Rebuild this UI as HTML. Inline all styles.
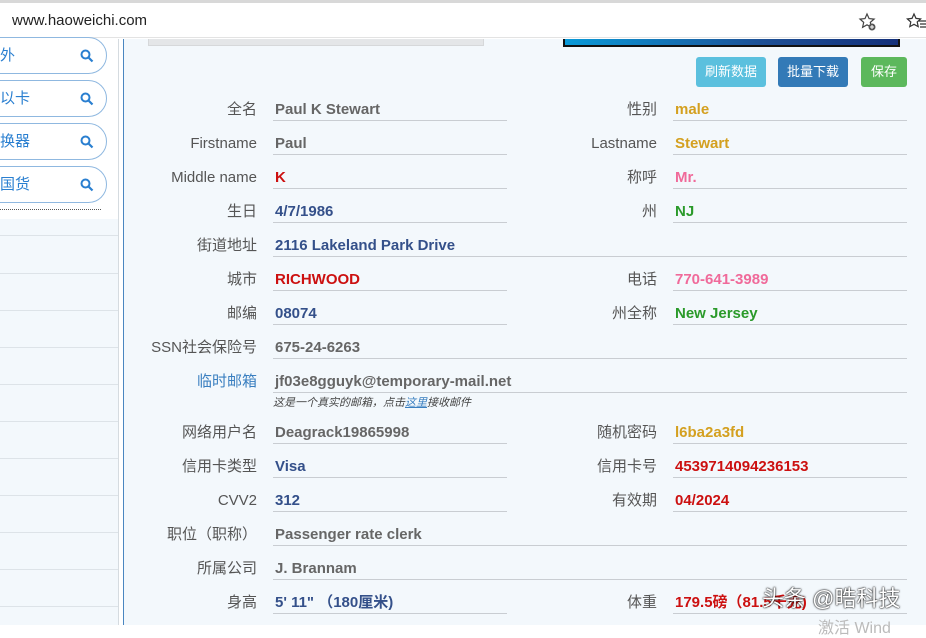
<!DOCTYPE html>
<html><head><meta charset="utf-8"><style>
*{margin:0;padding:0;box-sizing:border-box}
body{width:926px;height:625px;overflow:hidden;background:#fff;font-family:"Liberation Sans","Noto Sans CJK SC",sans-serif;position:relative}
.a{position:absolute}
.lb{position:absolute;text-align:right;font-size:15px;color:#555;line-height:18px;white-space:nowrap;margin-top:2px}
.v{position:absolute;font-size:15px;font-weight:bold;line-height:18px;white-space:nowrap;color:#666;margin-top:2px}
.ln{position:absolute;height:1px;background:#c9cdd2}
.pill{position:absolute;left:-30px;width:137px;height:37px;border:1px solid #8fb8e0;border-radius:19px;background:#fff;color:#2a7fd0;font-size:15px;line-height:35px;padding-left:29px}
.pill svg{position:absolute;right:12px;top:11px}
.sl{position:absolute;left:0;width:118px;height:1px;background:#dde3e8}
.btn{position:absolute;top:57px;height:30px;border-radius:3px;color:#fff;font-size:13px;line-height:30px;text-align:center}
</style></head><body>
<div class="a" style="left:0;top:0;width:926px;height:3px;background:#d8d8d8"></div>
<div class="a" style="left:0;top:3px;width:926px;height:35px;background:#fff;border-bottom:1px solid #e3e3e3"></div>
<div class="a" style="left:12px;top:12px;font-size:15px;color:#222">www.haoweichi.com</div>
<svg class="a" style="left:858px;top:12px" width="20" height="20" viewBox="0 0 20 20"><path d="M9 2l2.1 4.6 5 .5-3.8 3.3 1.1 4.9L9 12.8 4.6 15.3l1.1-4.9L2 7.1l5-.5z" fill="none" stroke="#444" stroke-width="1.2"/><circle cx="14" cy="15" r="3.5" fill="#555"/><path d="M14 13v4M12 15h4" stroke="#fff" stroke-width="1"/></svg>
<svg class="a" style="left:906px;top:12px" width="20" height="20" viewBox="0 0 20 20"><path d="M8 2l2 4.4 4.6.5-3.4 3.1 1 4.6L8 12.3 3.8 14.6l1-4.6L1.4 6.9 6 6.4z" fill="none" stroke="#333" stroke-width="1.2"/><path d="M13 9h7M14 12h6M14 15h6" stroke="#333" stroke-width="1.2"/></svg>
<div class="a" style="left:0;top:39px;width:118px;height:586px;background:#f3f8fc"></div>
<div class="a" style="left:0;top:39px;width:118px;height:180px;background:#fff"></div>
<div class="a" style="left:118px;top:39px;width:1px;height:586px;background:#d5dbe0"></div>
<div class="pill" style="top:37px">外<svg width="14" height="14" viewBox="0 0 14 14"><circle cx="5.5" cy="5.5" r="4" fill="none" stroke="#2a7fd0" stroke-width="2"/><path d="M8.5 8.5l4 4" stroke="#2a7fd0" stroke-width="2.2"/></svg></div>
<div class="pill" style="top:80px">以卡<svg width="14" height="14" viewBox="0 0 14 14"><circle cx="5.5" cy="5.5" r="4" fill="none" stroke="#2a7fd0" stroke-width="2"/><path d="M8.5 8.5l4 4" stroke="#2a7fd0" stroke-width="2.2"/></svg></div>
<div class="pill" style="top:123px">换器<svg width="14" height="14" viewBox="0 0 14 14"><circle cx="5.5" cy="5.5" r="4" fill="none" stroke="#2a7fd0" stroke-width="2"/><path d="M8.5 8.5l4 4" stroke="#2a7fd0" stroke-width="2.2"/></svg></div>
<div class="pill" style="top:166px">国货<svg width="14" height="14" viewBox="0 0 14 14"><circle cx="5.5" cy="5.5" r="4" fill="none" stroke="#2a7fd0" stroke-width="2"/><path d="M8.5 8.5l4 4" stroke="#2a7fd0" stroke-width="2.2"/></svg></div>
<div class="a" style="left:0;top:209px;width:101px;border-top:1px dotted #555"></div>
<div class="sl" style="top:235px"></div><div class="sl" style="top:273px"></div><div class="sl" style="top:310px"></div><div class="sl" style="top:347px"></div><div class="sl" style="top:384px"></div><div class="sl" style="top:421px"></div><div class="sl" style="top:458px"></div><div class="sl" style="top:495px"></div><div class="sl" style="top:532px"></div><div class="sl" style="top:569px"></div><div class="sl" style="top:606px"></div>
<div class="a" style="left:123px;top:39px;width:803px;height:586px;background:#f3f8fc;border-left:1px solid #4a86c0"></div>
<div class="a" style="left:148px;top:39px;width:336px;height:7px;background:#e4e6e8;border:1px solid #d6d8da;border-top:none"></div>
<div class="a" style="left:563px;top:39px;width:337px;height:8px;background:linear-gradient(90deg,#0a9ad8,#1d4f95 60%,#14307a);border:2px solid #111;border-top:none"></div>
<div class="btn" style="left:696px;width:70px;background:#5bc0de">刷新数据</div>
<div class="btn" style="left:778px;width:70px;background:#337ab7">批量下载</div>
<div class="btn" style="left:861px;width:46px;background:#5cb85c">保存</div>

<div class="lb" style="right:669px;top:99px">全名</div><div class="v" style="left:275px;top:99px">Paul K Stewart</div><div class="ln" style="left:273px;top:120px;width:234px"></div>
<div class="lb" style="right:269px;top:99px">性别</div><div class="v" style="left:675px;top:99px;color:#d4a020">male</div><div class="ln" style="left:673px;top:120px;width:234px"></div>

<div class="lb" style="right:669px;top:133px">Firstname</div><div class="v" style="left:275px;top:133px">Paul</div><div class="ln" style="left:273px;top:154px;width:234px"></div>
<div class="lb" style="right:269px;top:133px">Lastname</div><div class="v" style="left:675px;top:133px;color:#d4a020">Stewart</div><div class="ln" style="left:673px;top:154px;width:234px"></div>

<div class="lb" style="right:669px;top:167px">Middle name</div><div class="v" style="left:275px;top:167px;color:#cc1010">K</div><div class="ln" style="left:273px;top:188px;width:234px"></div>
<div class="lb" style="right:269px;top:167px">称呼</div><div class="v" style="left:675px;top:167px;color:#f06a9a">Mr.</div><div class="ln" style="left:673px;top:188px;width:234px"></div>

<div class="lb" style="right:669px;top:201px">生日</div><div class="v" style="left:275px;top:201px;color:#34508a">4/7/1986</div><div class="ln" style="left:273px;top:222px;width:234px"></div>
<div class="lb" style="right:269px;top:201px">州</div><div class="v" style="left:675px;top:201px;color:#2a9a2a">NJ</div><div class="ln" style="left:673px;top:222px;width:234px"></div>

<div class="lb" style="right:669px;top:235px">街道地址</div><div class="v" style="left:275px;top:235px;color:#34508a">2116 Lakeland Park Drive</div><div class="ln" style="left:273px;top:256px;width:634px"></div>

<div class="lb" style="right:669px;top:269px">城市</div><div class="v" style="left:275px;top:269px;color:#cc1010">RICHWOOD</div><div class="ln" style="left:273px;top:290px;width:234px"></div>
<div class="lb" style="right:269px;top:269px">电话</div><div class="v" style="left:675px;top:269px;color:#f06a9a">770-641-3989</div><div class="ln" style="left:673px;top:290px;width:234px"></div>

<div class="lb" style="right:669px;top:303px">邮编</div><div class="v" style="left:275px;top:303px;color:#34508a">08074</div><div class="ln" style="left:273px;top:324px;width:234px"></div>
<div class="lb" style="right:269px;top:303px">州全称</div><div class="v" style="left:675px;top:303px;color:#2a9a2a">New Jersey</div><div class="ln" style="left:673px;top:324px;width:234px"></div>

<div class="lb" style="right:669px;top:337px">SSN社会保险号</div><div class="v" style="left:275px;top:337px">675-24-6263</div><div class="ln" style="left:273px;top:358px;width:634px"></div>

<div class="lb" style="right:669px;top:371px;color:#3a7fc0">临时邮箱</div><div class="v" style="left:275px;top:371px">jf03e8gguyk@temporary-mail.net</div><div class="ln" style="left:273px;top:392px;width:634px"></div>
<div class="a" style="left:273px;top:394px;font-size:11px;font-style:italic;color:#444">这是一个真实的邮箱，点击<span style="color:#3a7fc0;text-decoration:underline">这里</span>接收邮件</div>

<div class="lb" style="right:669px;top:422px">网络用户名</div><div class="v" style="left:275px;top:422px">Deagrack19865998</div><div class="ln" style="left:273px;top:443px;width:234px"></div>
<div class="lb" style="right:269px;top:422px">随机密码</div><div class="v" style="left:675px;top:422px;color:#d4a020">l6ba2a3fd</div><div class="ln" style="left:673px;top:443px;width:234px"></div>

<div class="lb" style="right:669px;top:456px">信用卡类型</div><div class="v" style="left:275px;top:456px;color:#34508a">Visa</div><div class="ln" style="left:273px;top:477px;width:234px"></div>
<div class="lb" style="right:269px;top:456px">信用卡号</div><div class="v" style="left:675px;top:456px;color:#cc1010">4539714094236153</div><div class="ln" style="left:673px;top:477px;width:234px"></div>

<div class="lb" style="right:669px;top:490px">CVV2</div><div class="v" style="left:275px;top:490px;color:#34508a">312</div><div class="ln" style="left:273px;top:511px;width:234px"></div>
<div class="lb" style="right:269px;top:490px">有效期</div><div class="v" style="left:675px;top:490px;color:#cc1010">04/2024</div><div class="ln" style="left:673px;top:511px;width:234px"></div>

<div class="lb" style="right:669px;top:524px">职位（职称）</div><div class="v" style="left:275px;top:524px">Passenger rate clerk</div><div class="ln" style="left:273px;top:545px;width:634px"></div>

<div class="lb" style="right:669px;top:558px">所属公司</div><div class="v" style="left:275px;top:558px">J. Brannam</div><div class="ln" style="left:273px;top:579px;width:634px"></div>

<div class="lb" style="right:669px;top:592px">身高</div><div class="v" style="left:275px;top:592px;color:#34508a">5' 11" （180厘米)</div><div class="ln" style="left:273px;top:613px;width:234px"></div>
<div class="lb" style="right:269px;top:592px">体重</div><div class="v" style="left:675px;top:592px;color:#cc1010">179.5磅（81.5千克)</div><div class="ln" style="left:673px;top:613px;width:234px"></div>

<div class="a" style="left:762px;top:581px;font-size:22px;color:#fff;text-shadow:0 0 2px #000,0 0 1px #000;white-space:nowrap">头条 @晧科技</div>
<div class="a" style="left:818px;top:614px;font-size:16px;color:#bbb">激活 Wind</div>
</body></html>
